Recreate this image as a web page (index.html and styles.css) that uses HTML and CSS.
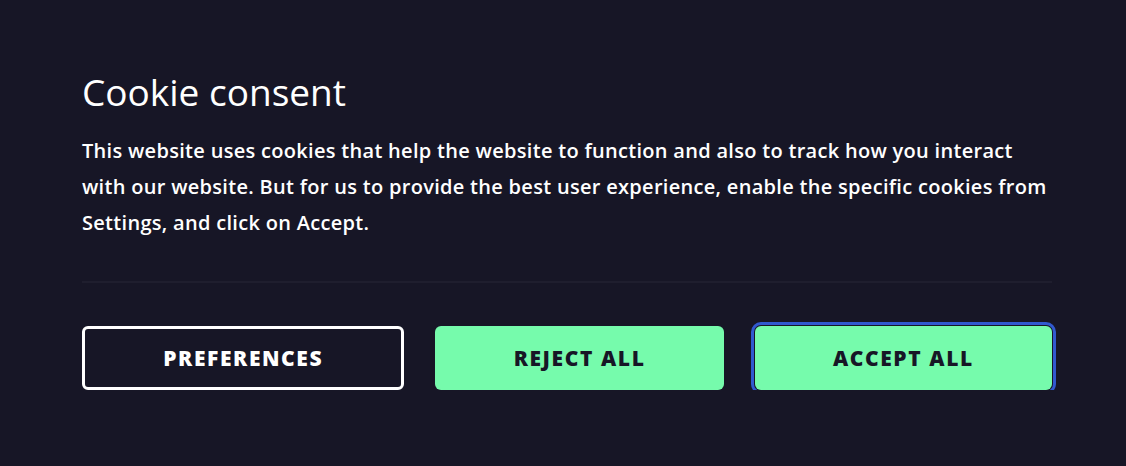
FILE: index.html
```html
<!DOCTYPE html>
<html lang="en">
<head>
  <meta charset="UTF-8">
  <title>Cookie consent</title>
  <link rel="stylesheet" href="styles.css">
</head>
<body>

  <div class="consent">
    <h1 class="title">Cookie consent</h1>
    <p class="text">This website uses cookies that help the website to function and also to track how you interact with our website. But for us to provide the best user experience, enable the specific cookies from Settings, and click on Accept.</p>

    <div class="divider"></div>

    <div class="actions">
      <button class="btn btn-outline">Preferences</button>
      <button class="btn btn-green">Reject All</button>
      <button class="btn btn-green btn-focus">Accept All</button>
    </div>
  </div>

</body>
</html>
```

FILE: styles.css
```css
body {
  margin: 0;
  background: #171626;
  color: #ffffff;
  font-family: "Open Sans", "Noto Sans", sans-serif;
}

.consent {
  padding: 70px 74px 0 82px;
}

.title {
  margin: 0;
  font-size: 37px;
  font-weight: 500;
  line-height: 44px;
}

.text {
  margin: 19px 0 0;
  font-size: 20px;
  font-weight: 600;
  line-height: 36px;
  letter-spacing: 0.3px;
}

.divider {
  height: 2px;
  margin: 40px 0 0;
  background: #1f1e2e;
}

.actions {
  display: flex;
  gap: 31px;
  margin-top: 43px;
}

.btn {
  flex: 1 1 auto;
  height: 64px;
  border-radius: 6px;
  font-family: "Open Sans", "Noto Sans", sans-serif;
  font-size: 21px;
  font-weight: 800;
  letter-spacing: 1.6px;
  text-transform: uppercase;
  cursor: pointer;
}

.btn-outline {
  background: transparent;
  color: #ffffff;
  border: 3px solid #ffffff;
}

.btn-green {
  background: #76fbac;
  color: #171626;
  border: none;
}

.btn-focus {
  outline: 3px solid #3159cf;
  outline-offset: 1px;
}
```
